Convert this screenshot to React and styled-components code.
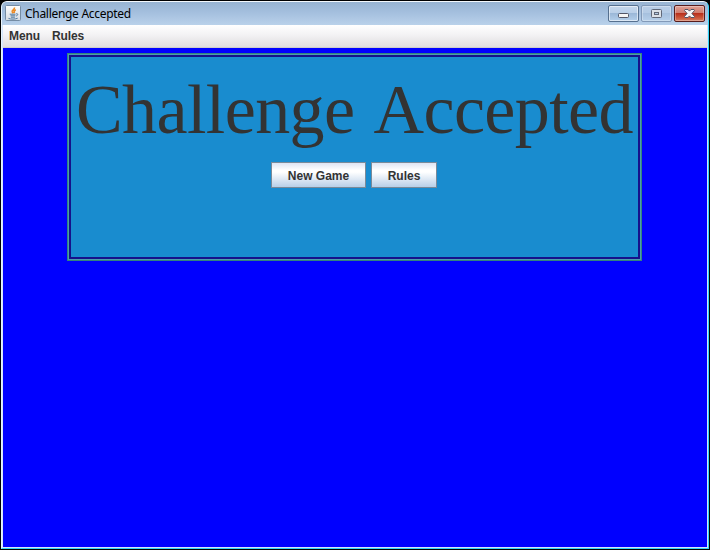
import React from "react";
import styled, { createGlobalStyle } from "styled-components";

const GlobalStyle = createGlobalStyle`
  * { box-sizing: border-box; }
  body { margin: 0; background: #000; overflow: hidden; }
`;

const Window = styled.div`
  width: 710px;
  height: 550px;
  display: flex;
  flex-direction: column;
  padding: 1px;
  background: #000;
`;

const Frame = styled.div`
  flex: 1;
  display: flex;
  flex-direction: column;
  border: 1px solid #35d3f5;
  border-left-color: #e8f4fc;
  border-top-color: #f4f8fc;
  border-radius: 6px 6px 0 0;
  overflow: hidden;
  background: #b5cce8;
`;

const TitleBar = styled.header`
  height: 23px;
  flex: none;
  display: flex;
  align-items: flex-start;
  padding: 0 3px;
  background: linear-gradient(180deg, #98b4d2 0%, #a4bfde 45%, #b9d1ea 100%);
`;

const AppIcon = styled.svg`
  flex: none;
  width: 16px;
  height: 16px;
  margin-top: 3px;
`;

const Caption = styled.h1`
  margin: 3px 0 0 4px;
  flex: 1;
  font: 400 12px/18px "Noto Sans", "Open Sans", sans-serif;
  letter-spacing: -0.3px;
  color: #000;
`;

const Controls = styled.div`
  display: flex;
  gap: 2px;
  margin-top: 3px;
`;

const tones = {
  normal: {
    edge: "#56708f",
    fill: "linear-gradient(180deg, #c5d7ec 0%, #b9cfe8 48%, #9bb8d8 50%, #b4cfeb 100%)",
  },
  muted: {
    edge: "#8299b8",
    fill: "linear-gradient(180deg, #b9cee7 0%, #b3cae5 48%, #a6c0de 50%, #b6cfea 100%)",
  },
  close: {
    edge: "#571c1c",
    fill: "linear-gradient(180deg, #e0a196 0%, #d07b6b 47%, #b9301c 50%, #cc5a3c 80%, #d98063 100%)",
  },
};

const ControlButton = styled.button`
  width: 31px;
  height: 17px;
  padding: 0;
  display: flex;
  align-items: center;
  justify-content: center;
  border: 1px solid ${({ $tone }) => tones[$tone].edge};
  border-radius: 2px;
  background: ${({ $tone }) => tones[$tone].fill};
  box-shadow: inset 0 0 0 1px rgba(255, 255, 255, ${({ $tone }) => ($tone === "normal" ? 0.55 : 0.3)});
`;

const Client = styled.div`
  flex: 1;
  display: flex;
  flex-direction: column;
  border: 1px solid #d5e5fa;
  border-top: 0;
  background: #0000ff;
`;

const MenuBar = styled.nav`
  height: 23px;
  flex: none;
  display: flex;
  gap: 12px;
  padding: 0 6px;
  border-bottom: 1px solid #ccc;
  background: linear-gradient(180deg, #fff 0%, #f3f2f4 45%, #dfdddf 100%);
`;

const MenuItem = styled.span`
  font: 700 12px/22px "Liberation Sans", Arial, sans-serif;
  letter-spacing: -0.1px;
  color: #333;
`;

const Content = styled.main`
  flex: 1;
  display: flex;
  justify-content: center;
  align-items: flex-start;
  padding: 5px 1px 0 0;
`;

const EtchedBorder = styled.section`
  width: 575px;
  height: 208px;
  border: 1px solid #33837e;
  background: #4a9eac;
  padding: 1px;
`;

const Panel = styled.div`
  height: 100%;
  border: 2px solid #16118a;
  background: #198ccf;
  display: flex;
  flex-direction: column;
  align-items: center;
`;

const Title = styled.h2`
  margin: 12px 0 0;
  font: 400 70px/82px "Liberation Serif", "Times New Roman", serif;
  letter-spacing: -0.6px;
  word-spacing: 6px;
  color: #333;
  white-space: nowrap;
`;

const ButtonRow = styled.div`
  display: flex;
  gap: 5px;
  margin: 11px 2px 0 0;
`;

const Button = styled.button`
  width: ${({ $width }) => $width}px;
  height: 26px;
  padding: 2px 0 0 1px;
  border: 1px solid #7a8a99;
  background: linear-gradient(180deg, #dde4f3 0%, #fff 30%, #fff 38%, #b8cfe8 100%);
  font: 700 12px/22px "Liberation Sans", Arial, sans-serif;
  color: #333;
`;

function JavaIcon() {
  return (
    <AppIcon viewBox="0 0 16 16" aria-hidden="true">
      <defs>
        <linearGradient id="tile" x1="0" y1="0" x2="0" y2="1">
          <stop offset="0" stopColor="#fff" />
          <stop offset="1" stopColor="#d5dbe2" />
        </linearGradient>
      </defs>
      <rect x="0.5" y="0.5" width="15" height="15" rx="1" fill="url(#tile)" stroke="#758ca4" />
      <path d="M9.4 2.5C10.1 4.5 6.4 5.2 7.2 6.9L8.2 8.3M10.8 4.7C8.4 5.8 9 6.5 9.4 8.1" fill="none" stroke="#ec8a24" strokeWidth="1.6" />
      <path d="M4.7 9.2H10.5M5.5 10.8H10.3M5.9 12.2H9.9M3.5 13.4C5.5 14.4 10.5 14.3 12.7 13.2M11.1 8.8C13.5 8.4 13.3 10.4 11.1 11" fill="none" stroke="#517aa0" />
    </AppIcon>
  );
}

function MinimizeIcon() {
  return (
    <svg width="11" height="15" viewBox="0 0 11 15" aria-hidden="true">
      <rect x="0.5" y="7.5" width="10" height="4" rx="1" fill="#f5f5f5" stroke="#535666" />
    </svg>
  );
}

function MaximizeIcon() {
  return (
    <svg width="11" height="9" viewBox="0 0 11 9" aria-hidden="true">
      <rect x="0.5" y="0.5" width="10" height="8" rx="1" fill="#dce1e8" stroke="#606878" />
      <rect x="3.5" y="3.5" width="4" height="2" fill="#b4cae4" stroke="#606878" />
    </svg>
  );
}

function CloseIcon() {
  return (
    <svg width="13" height="9" viewBox="0 0 13 9" aria-hidden="true">
      <path d="M2 0.5H5L6.5 2.1L8 0.5H11L11.5 1.5L8.9 4.5L11.5 7.5L11 8.5H8L6.5 6.9L5 8.5H2L1.5 7.5L4.1 4.5L1.5 1.5Z" fill="#f7f7f7" stroke="#535666" />
    </svg>
  );
}

export default function App() {
  return (
    <>
      <GlobalStyle />
      <Window>
        <Frame>
          <TitleBar>
            <JavaIcon />
            <Caption>Challenge Accepted</Caption>
            <Controls>
              <ControlButton $tone="normal" aria-label="Minimize"><MinimizeIcon /></ControlButton>
              <ControlButton $tone="muted" aria-label="Maximize"><MaximizeIcon /></ControlButton>
              <ControlButton $tone="close" aria-label="Close"><CloseIcon /></ControlButton>
            </Controls>
          </TitleBar>
          <Client>
            <MenuBar>
              <MenuItem>Menu</MenuItem>
              <MenuItem>Rules</MenuItem>
            </MenuBar>
            <Content>
              <EtchedBorder>
                <Panel>
                  <Title>Challenge Accepted</Title>
                  <ButtonRow>
                    <Button $width={95}>New Game</Button>
                    <Button $width={66}>Rules</Button>
                  </ButtonRow>
                </Panel>
              </EtchedBorder>
            </Content>
          </Client>
        </Frame>
      </Window>
    </>
  );
}
